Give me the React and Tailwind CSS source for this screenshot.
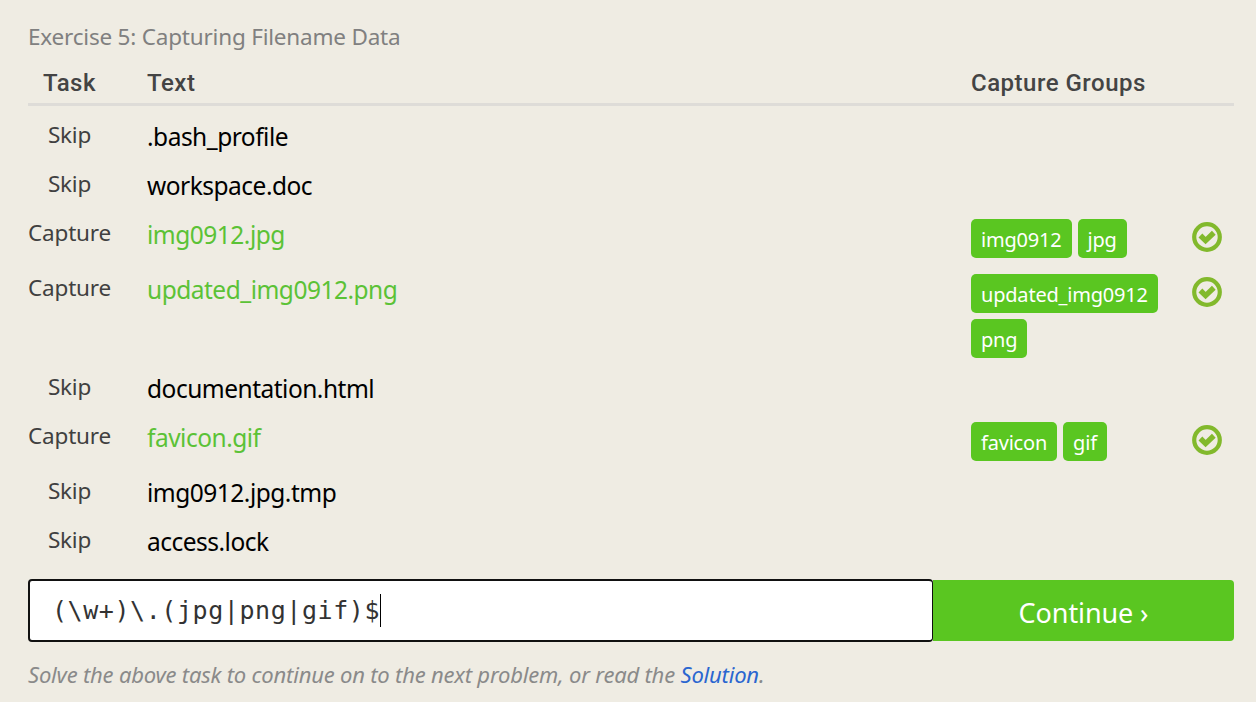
const rows = [
  { task: "Skip", text: ".bash_profile", height: "h-[49px]" },
  { task: "Skip", text: "workspace.doc", height: "h-[49px]" },
  { task: "Capture", text: "img0912.jpg", groups: ["img0912", "jpg"], height: "h-[55px]" },
  { task: "Capture", text: "updated_img0912.png", groups: ["updated_img0912", "png"], height: "h-[99px]" },
  { task: "Skip", text: "documentation.html", height: "h-[49px]" },
  { task: "Capture", text: "favicon.gif", groups: ["favicon", "gif"], height: "h-[55px]" },
  { task: "Skip", text: "img0912.jpg.tmp", height: "h-[49px]" },
  { task: "Skip", text: "access.lock", height: "h-[49px]" },
];

function CheckIcon() {
  return (
    <svg className="mt-[13px] block size-[30px]" viewBox="0 0 30 30" fill="none" stroke="#82b92c">
      <circle cx="15" cy="15" r="12.8" strokeWidth="4.2" />
      <path d="M8.4 13.5 L13.6 18.6 L21.8 10.8" strokeWidth="5.4" />
    </svg>
  );
}

function Row({ task, text, groups, height }) {
  return (
    <div className={`grid grid-cols-[119px_824px_221px_42px] items-start ${height}`}>
      <div className="mt-2 pr-9 text-center text-[22.5px] leading-8 tracking-[-0.2px] text-[#404040]">{task}</div>
      <div className={`mt-2.5 text-[24.5px] leading-8 tracking-[-0.5px] ${groups ? "text-[#5bc236]" : "text-black"}`}>
        {text}
      </div>
      <div className="mt-2.5 flex flex-wrap gap-1.5 pr-6">
        {groups?.map((group) => (
          <span
            key={group}
            className="h-[39px] rounded-[5px] bg-[#5ac621] px-2.5 text-[20px] leading-[41px] tracking-[-0.2px] text-white"
          >
            {group}
          </span>
        ))}
      </div>
      {groups && <CheckIcon />}
    </div>
  );
}

export default function App() {
  return (
    <main className="h-[702px] w-[1256px] overflow-hidden bg-[#efece3] pl-7 pr-[22px] pt-5 font-['Noto_Sans',sans-serif]">
      <h1 className="h-[42px] pt-px text-[22.5px] leading-8 tracking-[-0.2px] text-[#808080]">
        Exercise 5: Capturing Filename Data
      </h1>
      <div className="grid h-[44px] grid-cols-[119px_824px_1fr] border-b-[3px] border-[#dedcd8] font-['Roboto',sans-serif] text-2xl font-medium leading-[43px] tracking-[0.5px] text-[#444]">
        <div className="pr-9 text-center">Task</div>
        <div>Text</div>
        <div>Capture Groups</div>
      </div>
      <div className="mt-[5px]">
        {rows.map((row) => (
          <Row key={row.text} {...row} />
        ))}
      </div>
      <div className="mt-[14px] flex h-[63px]">
        <div className="flex w-[905px] items-center rounded border-2 border-r border-[#111] bg-white pl-[22px] font-['DejaVu_Sans_Mono',monospace] text-[25px] tracking-[0.57px] text-[#333]">
          <span>{"(\\w+)\\.(jpg|png|gif)$"}</span>
          <span className="h-[33px] w-px bg-black" />
        </div>
        <button className="mt-px h-[61px] grow rounded-r bg-[#5ac621] text-[27px] leading-[66px] tracking-[-0.1px] text-white">
          Continue ›
        </button>
      </div>
      <p className="mt-4 text-[22px] italic leading-8 tracking-[-0.2px] text-[#8a8a8a]">
        Solve the above task to continue on to the next problem, or read the{" "}
        <a className="text-[#2a66d0]">Solution</a>.
      </p>
    </main>
  );
}
